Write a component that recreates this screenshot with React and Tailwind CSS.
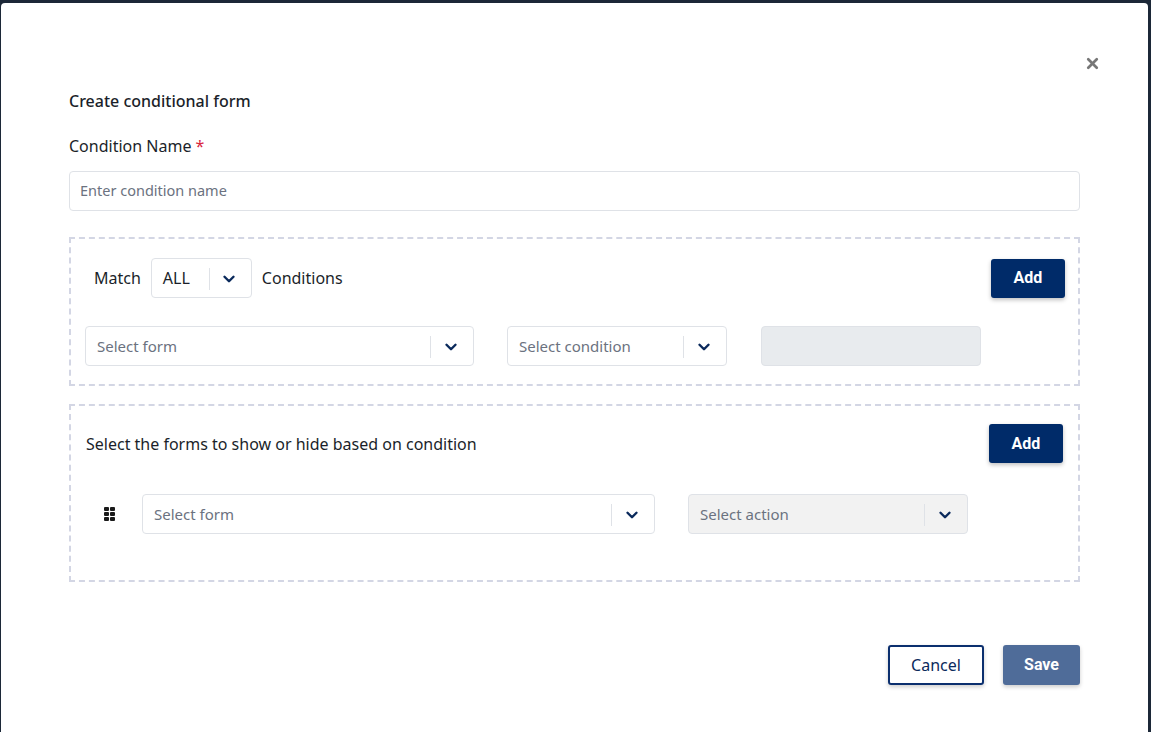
import { ChevronDown, X } from "lucide-react";

const font = { fontFamily: '"Noto Sans", "Open Sans", sans-serif' };

const SelectBox = ({ placeholder, width, disabled, dividerRight = "right-[42px]" }) => (
  <div
    className={`relative h-10 ${width} flex items-center rounded border border-[#dfe2e7] ${
      disabled ? "bg-[#f2f2f2]" : "bg-white"
    }`}
  >
    <span className="pl-[11px] text-[15px] text-[#6b7280]">{placeholder}</span>
    <span className={`absolute top-[9px] ${dividerRight} h-[22px] w-px bg-[#dfe2e7]`}></span>
    <ChevronDown
      className="absolute right-[13px] top-[11px] text-[#0b2a5c]"
      size={18}
      strokeWidth={3.2}
    />
  </div>
);

const AddButton = () => (
  <button
    className="h-[39px] w-[74px] rounded-[3px] bg-[#002b69] text-white text-[16px] font-bold shadow-[0_2px_4px_rgba(0,0,0,0.25)]"
    style={{ fontFamily: "Roboto, sans-serif" }}
  >
    Add
  </button>
);

const DragHandle = () => (
  <div className="grid grid-cols-2 gap-[1px] w-[11px]">
    {[0, 1, 2, 3, 4, 5].map((i) => (
      <span key={i} className="w-[5px] h-[4px] bg-[#1a1a1a] rounded-[1px]"></span>
    ))}
  </div>
);

export default function App() {
  return (
    <div className="min-h-[732px] bg-[#1c2838] pt-[3px] pl-px pr-[3px]" style={font}>
      <div className="bg-white rounded-t-[4px] min-h-[729px] px-[68px] pt-[48px] relative">
        <button className="absolute right-[47px] top-[52px] text-[#777]">
          <X size={17} strokeWidth={3.8} />
        </button>

        <h2 className="text-[16px] font-medium text-[#1b1f2a] mt-[40px] leading-5">
          Create conditional form
        </h2>

        <label className="block mt-[25px] text-[16px] text-[#1b1f2a] leading-5">
          Condition Name <span className="text-[#d9263d]">*</span>
        </label>

        <div className="mt-[15px] h-10 flex items-center rounded border border-[#dfe2e7] pl-[10px] text-[14.5px] text-[#6b7280]">
          Enter condition name
        </div>

        <div className="mt-[26px] border-2 border-dashed border-[#d3d6e4] pl-[14px] pr-[13px] pt-[19px] pb-[18px]">
          <div className="flex items-center justify-between">
            <div className="flex items-center gap-[10px] pl-[9px] text-[16px] text-[#1b1f2a]">
              <span>Match</span>
              <div className="relative h-10 w-[101px] flex items-center rounded border border-[#dfe2e7]">
                <span className="pl-[11px]">ALL</span>
                <span className="absolute top-[9px] right-[41px] h-[22px] w-px bg-[#dfe2e7]"></span>
                <ChevronDown
                  className="absolute right-[13px] top-[11px] text-[#0b2a5c]"
                  size={18}
                  strokeWidth={3.2}
                />
              </div>
              <span>Conditions</span>
            </div>
            <AddButton />
          </div>
          <div className="flex items-center mt-[28px]">
            <SelectBox placeholder="Select form" width="w-[389px]" />
            <div className="w-[33px]"></div>
            <SelectBox placeholder="Select condition" width="w-[220px]" />
            <div className="w-[34px]"></div>
            <div className="h-10 w-[220px] rounded border border-[#dfe2e7] bg-[#e8ebee]"></div>
          </div>
        </div>

        <div className="mt-[18px] border-2 border-dashed border-[#d3d6e4] pl-[15px] pr-[15px] pt-[18px] pb-[46px]">
          <div className="flex items-center justify-between">
            <span className="text-[16px] text-[#1b1f2a]">
              Select the forms to show or hide based on condition
            </span>
            <AddButton />
          </div>
          <div className="flex items-center mt-[31px]">
            <div className="w-[56px] pl-[18px]">
              <DragHandle />
            </div>
            <SelectBox placeholder="Select form" width="w-[513px]" />
            <div className="w-[33px]"></div>
            <SelectBox placeholder="Select action" width="w-[280px]" disabled />
          </div>
        </div>

        <div className="flex justify-end gap-[19px] mt-[63px]">
          <button className="h-10 w-[96px] rounded-[3px] border-2 border-[#0b2f6e] text-[#0b2a5c] text-[16px] shadow-[0_2px_4px_rgba(0,0,0,0.2)]">
            Cancel
          </button>
          <button
            className="h-10 w-[77px] rounded-[3px] bg-[#4f6c99] text-white text-[16px] font-bold shadow-[0_2px_4px_rgba(0,0,0,0.2)]"
            style={{ fontFamily: "Roboto, sans-serif" }}
          >
            Save
          </button>
        </div>
      </div>
    </div>
  );
}
